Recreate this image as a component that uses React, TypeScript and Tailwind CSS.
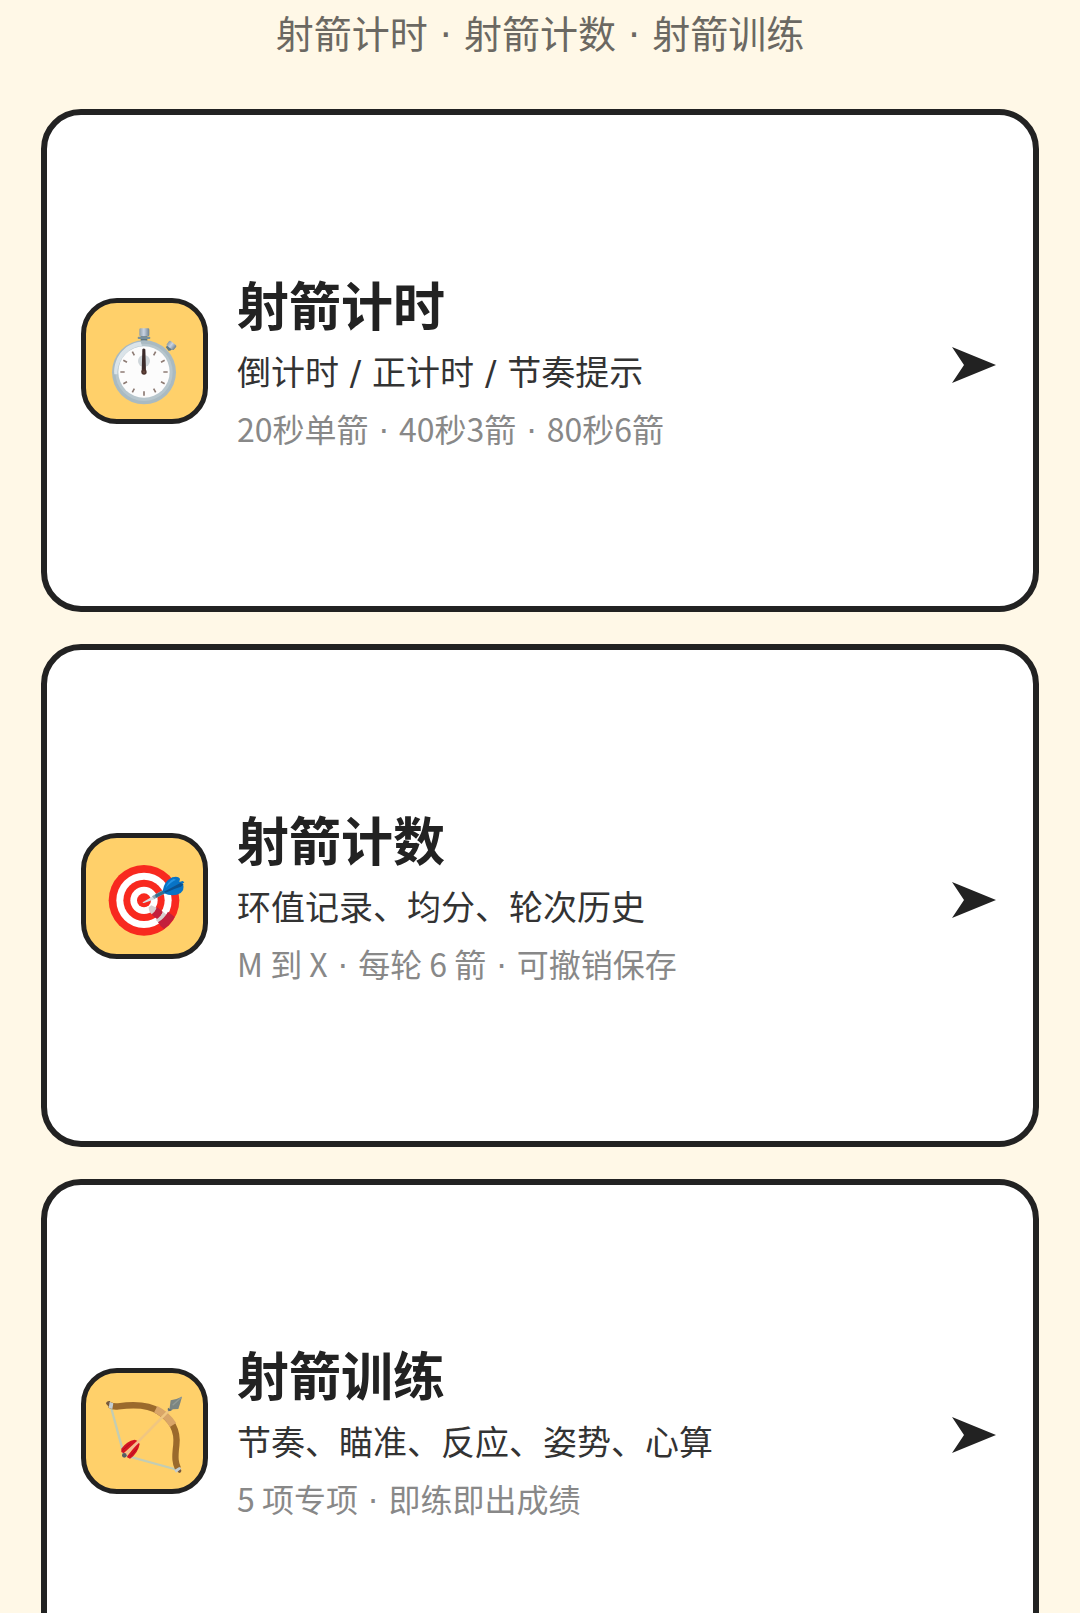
import React from 'react';

const StopwatchIcon: React.FC = () => (
  <svg className="h-full w-full" viewBox="48 54 351 348" fill="none" aria-hidden="true">
    <defs>
      <linearGradient id="crown" x1="0" y1="0" x2="1" y2="0">
        <stop offset="0" stopColor="#8d9da8" />
        <stop offset="0.45" stopColor="#c9d3e2" />
        <stop offset="1" stopColor="#6f8290" />
      </linearGradient>
    </defs>
    <path d="M290 183l12 -9 10 15 -13 9z" fill="#5f7986" />
    <path d="M287 186l12-8 3 14-6 6z" fill="#5f7986" />
    <rect x="291" y="172" width="27" height="18" rx="4" fill="url(#crown)" transform="rotate(38 304 181)" />
    <rect x="212" y="150" width="20" height="18" fill="#5c7380" />
    <rect x="203" y="155" width="38" height="7" rx="3" fill="#78909c" />
    <rect x="208" y="130" width="30" height="24" rx="4" fill="url(#crown)" />
    <circle cx="222" cy="262" r="96" fill="#a9bac2" />
    <circle cx="222" cy="262" r="86" fill="#b7c6cd" />
    <path d="M133 268C129 222 160 176 212 170L216 182C174 187 143 222 142 268Z" fill="#dbe4e9" />
    <circle cx="222" cy="261" r="77" fill="#fcfcfc" />
    <circle cx="222" cy="228" r="18" fill="#cfd6da" />
    <g stroke="#8d7b74" strokeWidth="5">
      <path d="M222 319v13M251 311l6 11M273 290l11 6M280 261h13M273 232l11-6M251 211l6-11M193 211l-6-11M171 232l-11-6M164 261h-13M171 290l-11 6M193 311l-6 11" />
    </g>
    <path d="M217 193q4-5 9 0l2 68h-13z" fill="#3b2b2a" />
    <circle cx="222" cy="261" r="8" fill="#4e342e" />
    <circle cx="222" cy="261" r="3" fill="#6d4c41" />
  </svg>
);

const TargetIcon: React.FC = () => (
  <svg className="h-full w-full" viewBox="48 54 351 348" fill="none" aria-hidden="true">
    <circle cx="222" cy="241" r="106" fill="#f8291f" />
    <circle cx="222" cy="241" r="83" fill="#fff" />
    <circle cx="222" cy="241" r="62" fill="#f8291f" />
    <circle cx="222" cy="241" r="41" fill="#fff" />
    <circle cx="222" cy="241" r="21" fill="#f8291f" />
    <path d="M236 262l8-6 17 8q-5 13-16 19-9-8-9-21z" fill="#d6cece" />
    <path d="M261 261l18 15q-5 14-17 22l-17-14q12-9 16-23z" fill="#c3203c" />
    <path d="M279 275l17 14q-8 16-21 27-10-8-18-17 16-9 22-24z" fill="#d6cece" />
    <path d="M294 275l20 16q-11 21-32 36-13-10-18-20 20-13 30-32z" fill="#c3203c" />
    <path d="M218 247l32-19 6 9-34 12q-5 1-4-2z" fill="#d7dfe4" />
    <path d="M246 229l31-18 6 10-30 16z" fill="#8ba6b3" />
    <path d="M255 224l28-14 5 8-30 15z" fill="#32708f" />
    <path d="M278 213q4-29 29-41 17-5 23 4l-2 10 10-3 5 4-7 6 4 3q3 14-8 23-22 14-52 0z" fill="#0873c5" />
    <path d="M282 215l49-26 10 4-8 7q-17 5-46 18z" fill="#0b518f" />
    <path d="M287 205q5-20 24-29l7 3q-19 9-31 26z" fill="#2494e5" />
  </svg>
);

const BowIcon: React.FC = () => (
  <svg className="h-full w-full" viewBox="48 54 351 348" fill="none" aria-hidden="true">
    <path d="M122 153L162 300L324 345" stroke="#c3cdb4" strokeWidth="7" />
    <path d="M119 150Q130 156 145 154C190 148 235 147 267 170C304 192 324 222 319 270C314 310 316 325 324 341" stroke="#9b6a2c" strokeWidth="19" />
    <path d="M108 146q1-9 12-8l4 16-7 2zM320 346l9-8 5 8q0 8-7 8z" fill="#76593c" />
    <path d="M119 141l11 4-3 17-11-3zM313 345l15-9 6 5-16 12z" fill="#c3cdd1" />
    <path d="M257 163Q291 180 309 210" stroke="#d9a568" strokeWidth="22" />
    <path d="M169 296L303 160" stroke="#f0c681" strokeWidth="7" />
    <path d="M298 165l4-29q17-3 34-11-5 20-11 37l-16 1-8 5z" fill="#7c8581" />
    <path d="M308 151l27-25" stroke="#929a95" strokeWidth="4" />
    <path d="M294 158l11 8-9 3-3-5z" fill="#606f70" />
    <path d="M154 281Q170 258 194 254l8 3-41 38-7-4z" fill="#d41523" />
    <path d="M172 303L205 262l4 5q-5 28-29 44l-9-4z" fill="#d41523" />
    <path d="M164 300L206 260" stroke="#f5b998" strokeWidth="6" />
    <path d="M157 286l24-20M181 304l20-23" stroke="#b40e1d" strokeWidth="3" />
    <circle cx="163" cy="301" r="7" fill="#565f62" />
  </svg>
);

// Dots and slashes between phrases use a roomier face than the Chinese text
const Phrases: React.FC<{ text: string }> = ({ text }) => (
  <>
    {text.split(/( [·/] )/).map((part, index) =>
      index % 2 ? (
        <span key={index} className="font-['DejaVu_Sans',sans-serif] leading-none">{part}</span>
      ) : (
        part
      )
    )}
  </>
);

const App: React.FC = () => {
  const entries = [
    {
      id: 'timer',
      title: '射箭计时',
      description: '倒计时 / 正计时 / 节奏提示',
      note: '20秒单箭 · 40秒3箭 · 80秒6箭',
      icon: <StopwatchIcon />
    },
    {
      id: 'score',
      title: '射箭计数',
      description: '环值记录、均分、轮次历史',
      note: 'M 到 X · 每轮 6 箭 · 可撤销保存',
      icon: <TargetIcon />
    },
    {
      id: 'training',
      title: '射箭训练',
      description: '节奏、瞄准、反应、姿势、心算',
      note: '5 项专项 · 即练即出成绩',
      icon: <BowIcon />
    }
  ];

  return (
    <div
      lang="zh-CN"
      className="h-screen overflow-hidden bg-[#fff8e7] px-[41px] pt-1.5 font-['Noto_Sans_CJK_SC',sans-serif] text-[#222]"
    >
      <p className="mb-[51px] text-center text-[38px] leading-[52px] text-[#6b6862]">
        <Phrases text="射箭计时 · 射箭计数 · 射箭训练" />
      </p>

      <nav className="flex flex-col gap-8">
        {entries.map((entry) => (
          <a
            key={entry.id}
            href={`#${entry.id}`}
            className="flex min-h-[503px] items-center gap-[29px] rounded-[40px] border-6 border-[#222] bg-white px-[34px]"
          >
            <span className="h-[126px] w-[127px] shrink-0 rounded-[36px] border-5 border-[#222] bg-[#ffd06a]">
              {entry.icon}
            </span>
            <div className="min-w-0 flex-1">
              <h2 className="text-[52px] leading-[64px] font-bold">{entry.title}</h2>
              <p className="mt-[13px] text-[34px] leading-[44px] text-[#333]">
                <Phrases text={entry.description} />
              </p>
              <p className="mt-[13px] text-[32px] leading-[44px] text-[#888]">
                <Phrases text={entry.note} />
              </p>
            </div>
            <svg className="mt-2 mr-[3px] h-9 w-11 shrink-0" viewBox="0 0 44 36" fill="currentColor" aria-hidden="true">
              <path d="M0 0L44 18L0 36L12 18Z" />
            </svg>
          </a>
        ))}
      </nav>
    </div>
  );
};

export default App;
